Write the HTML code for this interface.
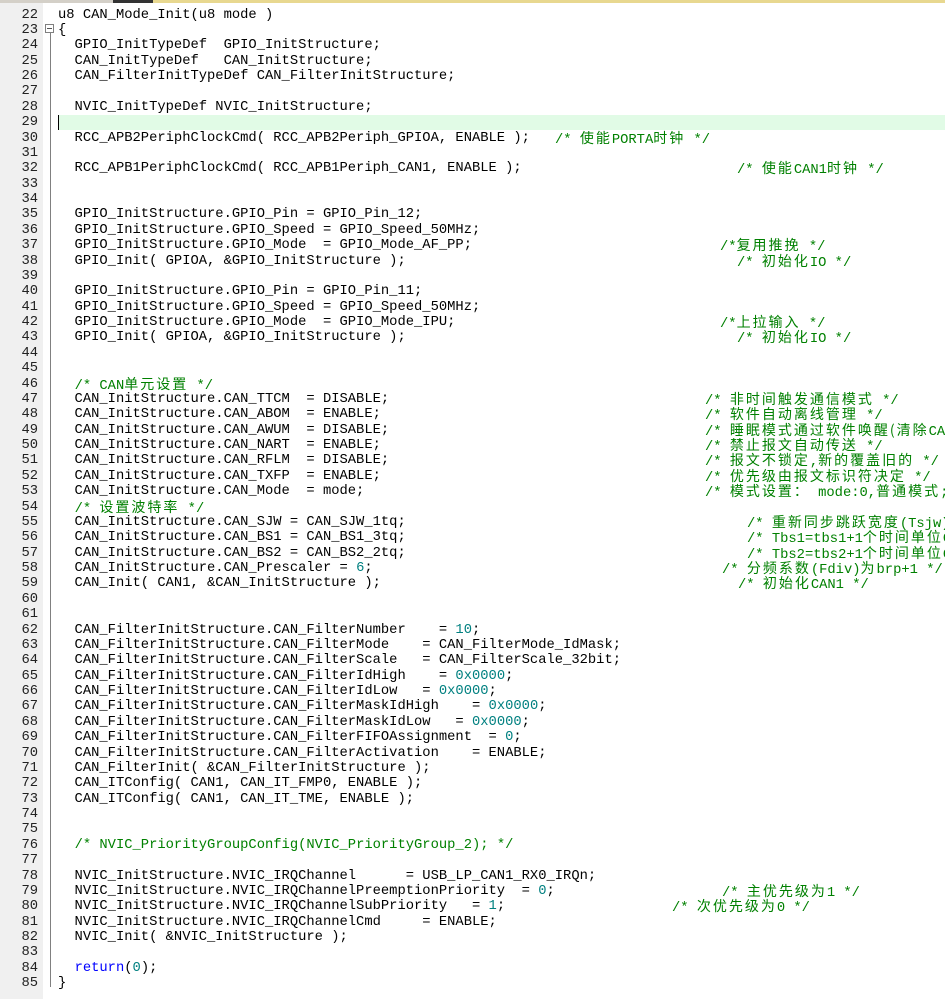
<!DOCTYPE html>
<html><head><meta charset="utf-8"><style>
html,body{margin:0;padding:0;width:945px;height:999px;overflow:hidden;background:#fff;}
body{position:relative;font-family:"Liberation Mono","Noto Sans CJK SC",monospace;font-size:13.8px;color:#000;}
.top{position:absolute;left:0;top:0;width:945px;height:3px;background:#d4d0c8;}
.top i{position:absolute;left:113px;top:0;width:40px;height:3px;background:#333;}
.top b{position:absolute;left:153px;top:0;width:792px;height:3px;background:#e8d890;}
.gut{position:absolute;left:0;top:3px;width:43px;height:996px;background:#f0f0f0;}
.fold{position:absolute;left:50px;top:32px;width:1px;height:955px;background:#808080;}
.fbox{position:absolute;left:45px;top:24px;width:9px;height:9px;border:1px solid #808080;background:#fff;box-sizing:border-box;}
.fbox:after{content:"";position:absolute;left:1px;top:3px;width:5px;height:1px;background:#555;}
.hl{position:absolute;left:58px;top:115px;width:887px;height:15px;background:#e1fbe6;}
.cur{position:absolute;left:58px;top:115px;width:1px;height:15px;background:#000;}
#c{position:absolute;left:0;top:7.5px;width:945px;height:991px;overflow:hidden;}
.l{position:relative;height:15.38px;line-height:15.38px;white-space:pre;}
.n{position:absolute;left:0;width:38px;text-align:right;color:#222;}
.t{position:absolute;left:58px;}
.cm{position:absolute;color:#008000;}
.g{color:#008000}
.k{color:#008080}
.b{color:#0000ff}
.z{font-family:"Noto Sans CJK SC","WenQuanYi Zen Hei",sans-serif;font-size:14px;letter-spacing:2px;line-height:15.38px;}
</style></head><body>
<div class="top"><i></i><b></b></div>
<div class="gut"></div>
<div class="hl"></div>
<div class="fbox"></div>
<div class="fold"></div>
<div class="cur"></div>
<div id="c">
<div class="l"><span class="n">22</span><span class="t">u8 CAN_Mode_Init(u8 mode )</span></div>
<div class="l"><span class="n">23</span><span class="t">{</span></div>
<div class="l"><span class="n">24</span><span class="t">  GPIO_InitTypeDef  GPIO_InitStructure;</span></div>
<div class="l"><span class="n">25</span><span class="t">  CAN_InitTypeDef   CAN_InitStructure;</span></div>
<div class="l"><span class="n">26</span><span class="t">  CAN_FilterInitTypeDef CAN_FilterInitStructure;</span></div>
<div class="l"><span class="n">27</span></div>
<div class="l"><span class="n">28</span><span class="t">  NVIC_InitTypeDef NVIC_InitStructure;</span></div>
<div class="l"><span class="n">29</span></div>
<div class="l"><span class="n">30</span><span class="t">  RCC_APB2PeriphClockCmd( RCC_APB2Periph_GPIOA, ENABLE );</span><span class="cm" style="left:555px">/* <span class="z">使能</span>PORTA<span class="z">时钟</span> */</span></div>
<div class="l"><span class="n">31</span></div>
<div class="l"><span class="n">32</span><span class="t">  RCC_APB1PeriphClockCmd( RCC_APB1Periph_CAN1, ENABLE );</span><span class="cm" style="left:737px">/* <span class="z">使能</span>CAN1<span class="z">时钟</span> */</span></div>
<div class="l"><span class="n">33</span></div>
<div class="l"><span class="n">34</span></div>
<div class="l"><span class="n">35</span><span class="t">  GPIO_InitStructure.GPIO_Pin = GPIO_Pin_12;</span></div>
<div class="l"><span class="n">36</span><span class="t">  GPIO_InitStructure.GPIO_Speed = GPIO_Speed_50MHz;</span></div>
<div class="l"><span class="n">37</span><span class="t">  GPIO_InitStructure.GPIO_Mode  = GPIO_Mode_AF_PP;</span><span class="cm" style="left:720px">/*<span class="z">复用推挽</span> */</span></div>
<div class="l"><span class="n">38</span><span class="t">  GPIO_Init( GPIOA, &amp;GPIO_InitStructure );</span><span class="cm" style="left:737px">/* <span class="z">初始化</span>IO */</span></div>
<div class="l"><span class="n">39</span></div>
<div class="l"><span class="n">40</span><span class="t">  GPIO_InitStructure.GPIO_Pin = GPIO_Pin_11;</span></div>
<div class="l"><span class="n">41</span><span class="t">  GPIO_InitStructure.GPIO_Speed = GPIO_Speed_50MHz;</span></div>
<div class="l"><span class="n">42</span><span class="t">  GPIO_InitStructure.GPIO_Mode  = GPIO_Mode_IPU;</span><span class="cm" style="left:720px">/*<span class="z">上拉输入</span> */</span></div>
<div class="l"><span class="n">43</span><span class="t">  GPIO_Init( GPIOA, &amp;GPIO_InitStructure );</span><span class="cm" style="left:737px">/* <span class="z">初始化</span>IO */</span></div>
<div class="l"><span class="n">44</span></div>
<div class="l"><span class="n">45</span></div>
<div class="l"><span class="n">46</span><span class="t">  <span class="g">/* CAN<span class="z">单元设置</span> */</span></span></div>
<div class="l"><span class="n">47</span><span class="t">  CAN_InitStructure.CAN_TTCM  = DISABLE;</span><span class="cm" style="left:705px">/* <span class="z">非时间触发通信模式</span> */</span></div>
<div class="l"><span class="n">48</span><span class="t">  CAN_InitStructure.CAN_ABOM  = ENABLE;</span><span class="cm" style="left:705px">/* <span class="z">软件自动离线管理</span> */</span></div>
<div class="l"><span class="n">49</span><span class="t">  CAN_InitStructure.CAN_AWUM  = DISABLE;</span><span class="cm" style="left:705px">/* <span class="z">睡眠模式通过软件唤醒(清除</span>CAN-&gt;MCR */</span></div>
<div class="l"><span class="n">50</span><span class="t">  CAN_InitStructure.CAN_NART  = ENABLE;</span><span class="cm" style="left:705px">/* <span class="z">禁止报文自动传送</span> */</span></div>
<div class="l"><span class="n">51</span><span class="t">  CAN_InitStructure.CAN_RFLM  = DISABLE;</span><span class="cm" style="left:705px">/* <span class="z">报文不锁定</span>,<span class="z">新的覆盖旧的</span> */</span></div>
<div class="l"><span class="n">52</span><span class="t">  CAN_InitStructure.CAN_TXFP  = ENABLE;</span><span class="cm" style="left:705px">/* <span class="z">优先级由报文标识符决定</span> */</span></div>
<div class="l"><span class="n">53</span><span class="t">  CAN_InitStructure.CAN_Mode  = mode;</span><span class="cm" style="left:705px">/* <span class="z">模式设置：</span> mode:0,<span class="z">普通模式</span>;1 */</span></div>
<div class="l"><span class="n">54</span><span class="t">  <span class="g">/* <span class="z">设置波特率</span> */</span></span></div>
<div class="l"><span class="n">55</span><span class="t">  CAN_InitStructure.CAN_SJW = CAN_SJW_1tq;</span><span class="cm" style="left:747px">/* <span class="z">重新同步跳跃宽度</span>(Tsjw)</span></div>
<div class="l"><span class="n">56</span><span class="t">  CAN_InitStructure.CAN_BS1 = CAN_BS1_3tq;</span><span class="cm" style="left:747px">/* Tbs1=tbs1+1<span class="z">个时间单位</span>CAN</span></div>
<div class="l"><span class="n">57</span><span class="t">  CAN_InitStructure.CAN_BS2 = CAN_BS2_2tq;</span><span class="cm" style="left:747px">/* Tbs2=tbs2+1<span class="z">个时间单位</span>CAN</span></div>
<div class="l"><span class="n">58</span><span class="t">  CAN_InitStructure.CAN_Prescaler = <span class="k">6</span>;</span><span class="cm" style="left:722px">/* <span class="z">分频系数</span>(Fdiv)<span class="z">为</span>brp+1 */</span></div>
<div class="l"><span class="n">59</span><span class="t">  CAN_Init( CAN1, &amp;CAN_InitStructure );</span><span class="cm" style="left:738px">/* <span class="z">初始化</span>CAN1 */</span></div>
<div class="l"><span class="n">60</span></div>
<div class="l"><span class="n">61</span></div>
<div class="l"><span class="n">62</span><span class="t">  CAN_FilterInitStructure.CAN_FilterNumber    = <span class="k">10</span>;</span></div>
<div class="l"><span class="n">63</span><span class="t">  CAN_FilterInitStructure.CAN_FilterMode    = CAN_FilterMode_IdMask;</span></div>
<div class="l"><span class="n">64</span><span class="t">  CAN_FilterInitStructure.CAN_FilterScale   = CAN_FilterScale_32bit;</span></div>
<div class="l"><span class="n">65</span><span class="t">  CAN_FilterInitStructure.CAN_FilterIdHigh    = <span class="k">0x0000</span>;</span></div>
<div class="l"><span class="n">66</span><span class="t">  CAN_FilterInitStructure.CAN_FilterIdLow   = <span class="k">0x0000</span>;</span></div>
<div class="l"><span class="n">67</span><span class="t">  CAN_FilterInitStructure.CAN_FilterMaskIdHigh    = <span class="k">0x0000</span>;</span></div>
<div class="l"><span class="n">68</span><span class="t">  CAN_FilterInitStructure.CAN_FilterMaskIdLow   = <span class="k">0x0000</span>;</span></div>
<div class="l"><span class="n">69</span><span class="t">  CAN_FilterInitStructure.CAN_FilterFIFOAssignment  = <span class="k">0</span>;</span></div>
<div class="l"><span class="n">70</span><span class="t">  CAN_FilterInitStructure.CAN_FilterActivation    = ENABLE;</span></div>
<div class="l"><span class="n">71</span><span class="t">  CAN_FilterInit( &amp;CAN_FilterInitStructure );</span></div>
<div class="l"><span class="n">72</span><span class="t">  CAN_ITConfig( CAN1, CAN_IT_FMP0, ENABLE );</span></div>
<div class="l"><span class="n">73</span><span class="t">  CAN_ITConfig( CAN1, CAN_IT_TME, ENABLE );</span></div>
<div class="l"><span class="n">74</span></div>
<div class="l"><span class="n">75</span></div>
<div class="l"><span class="n">76</span><span class="t">  <span class="g">/* NVIC_PriorityGroupConfig(NVIC_PriorityGroup_2); */</span></span></div>
<div class="l"><span class="n">77</span></div>
<div class="l"><span class="n">78</span><span class="t">  NVIC_InitStructure.NVIC_IRQChannel      = USB_LP_CAN1_RX0_IRQn;</span></div>
<div class="l"><span class="n">79</span><span class="t">  NVIC_InitStructure.NVIC_IRQChannelPreemptionPriority  = <span class="k">0</span>;</span><span class="cm" style="left:722px">/* <span class="z">主优先级为</span>1 */</span></div>
<div class="l"><span class="n">80</span><span class="t">  NVIC_InitStructure.NVIC_IRQChannelSubPriority   = <span class="k">1</span>;</span><span class="cm" style="left:672px">/* <span class="z">次优先级为</span>0 */</span></div>
<div class="l"><span class="n">81</span><span class="t">  NVIC_InitStructure.NVIC_IRQChannelCmd     = ENABLE;</span></div>
<div class="l"><span class="n">82</span><span class="t">  NVIC_Init( &amp;NVIC_InitStructure );</span></div>
<div class="l"><span class="n">83</span></div>
<div class="l"><span class="n">84</span><span class="t">  <span class="b">return</span>(<span class="k">0</span>);</span></div>
<div class="l"><span class="n">85</span><span class="t">}</span></div>
</div>
</body></html>
